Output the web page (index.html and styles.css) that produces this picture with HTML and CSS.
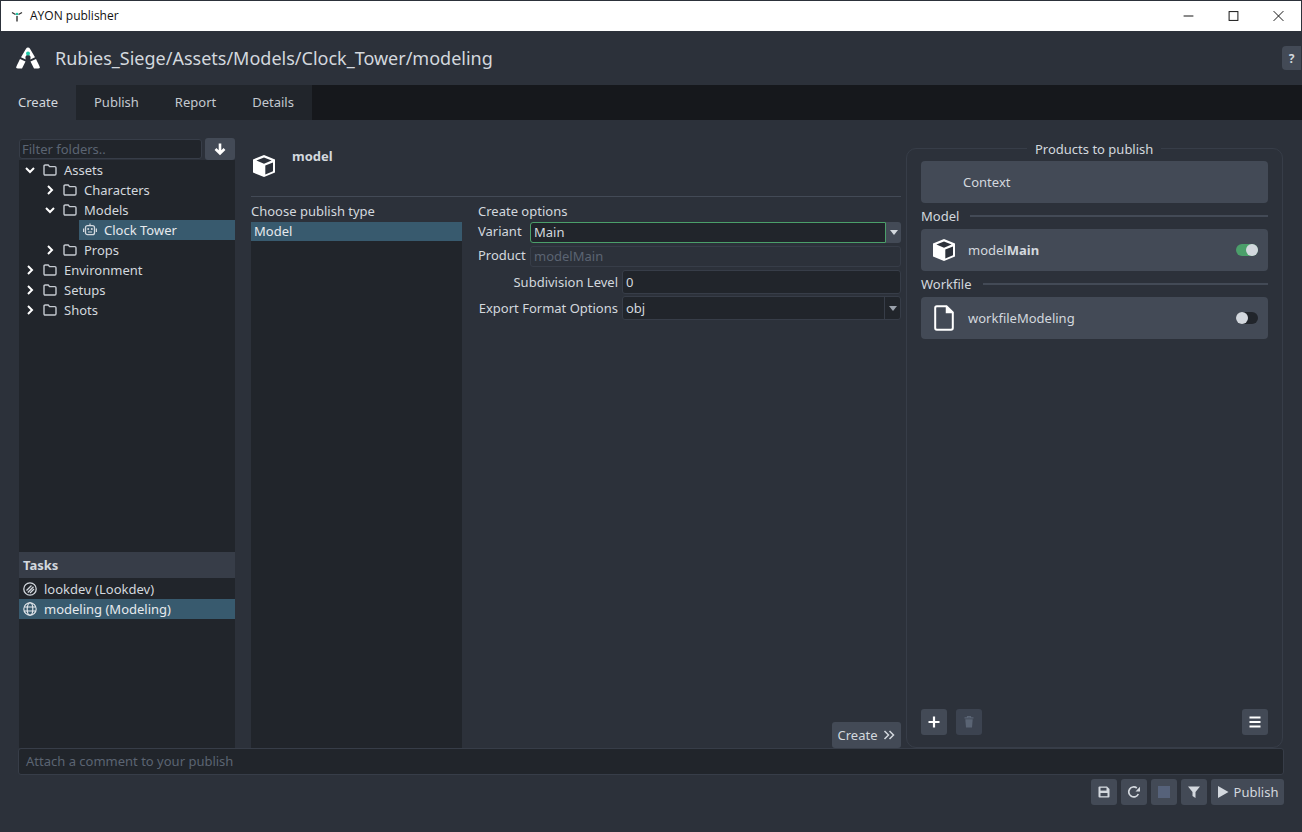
FILE: index.html
```html
<!DOCTYPE html>
<html lang="en">
<head>
    <meta charset="UTF-8">
    <title>AYON publisher</title>
    <link rel="stylesheet" href="styles.css">
</head>
<body>
    <svg class="sprites" width="0" height="0">
        <symbol id="folder" viewBox="0 0 14 12"><path d="M1 2.2Q1 1 2.2 1H5.2L6.6 2.6H11.8Q13 2.6 13 3.8V9.8Q13 11 11.8 11H2.2Q1 11 1 9.8Z" fill="none" stroke="currentColor" stroke-width="1.4"/></symbol>
        <symbol id="open" viewBox="0 0 10 10"><path d="M1 3L5 7L9 3" fill="none" stroke="currentColor" stroke-width="2"/></symbol>
        <symbol id="closed" viewBox="0 0 10 10"><path d="M3 1L7 5L3 9" fill="none" stroke="currentColor" stroke-width="2"/></symbol>
        <symbol id="cube" viewBox="0 0 24 24"><path d="M12 1L23 5.5V18.5L12 23L1 18.5V5.5Z" fill="#fff"/><path d="M12 3.6L19.6 6.6L12 9.7L4.4 6.6Z" fill="#2c313a"/><path d="M13.3 11.6L21 8.4V17.2L13.3 20.4Z" fill="#2c313a"/></symbol>
    </svg>

    <div class="titlebar">
        <svg class="app-icon" viewBox="0 0 12 12"><circle cx="6" cy="4" r="1.3" fill="#1fc8a8"/><path d="M1 2.5L4.5 4.5M11 2.5L7.5 4.5M6 6V11.5" stroke="#333" stroke-width="1.4"/></svg>
        <span class="app-name">AYON publisher</span>
        <div class="win-buttons">
            <svg viewBox="0 0 46 30"><path d="M18 15H28" stroke="#111"/></svg>
            <svg viewBox="0 0 46 30"><rect x="18.500" y="10.500" width="9" height="9" fill="none" stroke="#111"/></svg>
            <svg viewBox="0 0 46 30"><path d="M18 10L28 20M28 10L18 20" stroke="#111"/></svg>
        </div>
    </div>

    <div class="header">
        <svg class="logo" viewBox="0 0 24 22"><path d="M12 0.500Q13.300 0.500 14 1.700L19 10.300L14.300 12.500Q15.500 8 12 8Q8.500 8 9.700 12.500L5 10.300L10 1.700Q10.700 0.500 12 0.500Z" fill="#fff"/><path d="M4 12L9.500 14.500L6 21.500H2Q-0.500 21.500 0.600 19Z" fill="#fff"/><path d="M20 12L14.500 14.500L18 21.500H22Q24.500 21.500 23.400 19Z" fill="#fff"/><circle cx="12" cy="6.500" r="2" fill="#1fc8a8"/></svg>
        <span class="context-path">Rubies_Siege/Assets/Models/Clock_Tower/modeling</span>
        <button class="help-btn">?</button>
    </div>

    <div class="tabs">
        <div class="tab active">Create</div>
        <div class="tab">Publish</div>
        <div class="tab">Report</div>
        <div class="tab">Details</div>
    </div>

    <div class="main">
        <div class="left-col">
            <div class="filter-row">
                <div class="input filter-input placeholder">Filter folders..</div>
                <button class="btn filter-btn">
                    <svg viewBox="0 0 14 14"><path d="M7 1.500V11.500M2.500 7L7 11.500L11.500 7" fill="none" stroke="#fff" stroke-width="2.600"/></svg>
                </button>
            </div>
            <div class="tree">
                <div class="row lvl0"><svg class="chev"><use href="#open"/></svg><svg class="folder"><use href="#folder"/></svg>Assets</div>
                <div class="row lvl1"><svg class="chev"><use href="#closed"/></svg><svg class="folder"><use href="#folder"/></svg>Characters</div>
                <div class="row lvl1"><svg class="chev"><use href="#open"/></svg><svg class="folder"><use href="#folder"/></svg>Models</div>
                <div class="row lvl2 selected">
                    <svg class="folder robot" viewBox="0 0 14 14"><path d="M7 0.500V2.500" stroke="currentColor" stroke-width="1.200"/><rect x="2.500" y="2.700" width="9" height="9" rx="2" fill="none" stroke="currentColor" stroke-width="1.300"/><circle cx="5.200" cy="6" r="1" fill="currentColor"/><circle cx="8.800" cy="6" r="1" fill="currentColor"/><path d="M5 9H9M0.600 5.500V9M13.400 5.500V9" stroke="currentColor" stroke-width="1.200"/></svg>Clock Tower
                </div>
                <div class="row lvl1"><svg class="chev"><use href="#closed"/></svg><svg class="folder"><use href="#folder"/></svg>Props</div>
                <div class="row lvl0"><svg class="chev"><use href="#closed"/></svg><svg class="folder"><use href="#folder"/></svg>Environment</div>
                <div class="row lvl0"><svg class="chev"><use href="#closed"/></svg><svg class="folder"><use href="#folder"/></svg>Setups</div>
                <div class="row lvl0"><svg class="chev"><use href="#closed"/></svg><svg class="folder"><use href="#folder"/></svg>Shots</div>
            </div>
            <div class="tasks-head">Tasks</div>
            <div class="tasks">
                <div class="task">
                    <svg class="task-icon" viewBox="0 0 14 14"><circle cx="7" cy="7" r="6.200" fill="none" stroke="currentColor" stroke-width="1.300"/><path d="M3.500 8.500L8.500 3.500M4.800 10.500L10.500 4.800M7 11L11 7" stroke="currentColor" stroke-width="1.300"/></svg>lookdev (Lookdev)
                </div>
                <div class="task selected">
                    <svg class="task-icon" viewBox="0 0 14 14"><g fill="none" stroke="currentColor" stroke-width="1.100"><circle cx="7" cy="7" r="6.200"/><ellipse cx="7" cy="7" rx="2.800" ry="6.200"/><path d="M1.200 5H12.800M1.200 9H12.800"/></g></svg>modeling (Modeling)
                </div>
            </div>
        </div>

        <div class="mid-col">
            <div class="type-head">
                <svg class="cube-big"><use href="#cube"/></svg>
                <span class="type-name">model</span>
            </div>
            <div class="mid-body">
                <div class="type-col">
                    <div class="col-label">Choose publish type</div>
                    <div class="type-list"><div class="type-item">Model</div></div>
                </div>
                <div class="options-col">
                    <div class="col-label">Create options</div>
                    <div class="variant-row">
                        <label class="variant-label">Variant</label>
                        <div class="input variant-input">Main</div>
                        <div class="variant-arrow"><span class="arrow"></span></div>
                    </div>
                    <div class="variant-row product-row">
                        <label class="variant-label">Product</label>
                        <div class="input product-input">modelMain</div>
                    </div>
                    <div class="attrs">
                        <label>Subdivision Level</label>
                        <div class="input attr-input">0</div>
                        <label>Export Format Options</label>
                        <div class="input attr-input attr-select">obj<span class="select-btn"><span class="arrow"></span></span></div>
                    </div>
                    <div class="create-row">
                        <button class="btn create-btn">Create
                            <svg viewBox="0 0 12 12"><path d="M1.500 2L5.500 6L1.500 10M6.500 2L10.500 6L6.500 10" fill="none" stroke="currentColor" stroke-width="1.500"/></svg>
                        </button>
                    </div>
                </div>
            </div>
        </div>

        <div class="right-col">
            <div class="legend">Products to publish</div>
            <div class="card context-card">Context</div>
            <div class="group-label">Model</div>
            <div class="card">
                <svg class="cube-small"><use href="#cube"/></svg>
                <span>model<b>Main</b></span>
                <span class="toggle on"></span>
            </div>
            <div class="group-label">Workfile</div>
            <div class="card">
                <svg class="file-icon" viewBox="0 0 20 26"><path d="M2.800 1.200H12.500L18.800 7.500V23Q18.800 24.800 17 24.800H2.800Q1.200 24.800 1.200 23V3Q1.200 1.200 2.800 1.200Z" fill="none" stroke="#fff" stroke-width="2"/><path d="M12.500 1.200V7.500H18.800" fill="#fff" stroke="#fff" stroke-width="1.500"/></svg>
                <span class="file-name">workfileModeling</span>
                <span class="toggle"></span>
            </div>
            <div class="right-tools">
                <button class="btn square">
                    <svg viewBox="0 0 14 14"><path d="M7 1.500V12.500M1.500 7H12.500" stroke="#fff" stroke-width="2.200"/></svg>
                </button>
                <button class="btn square disabled">
                    <svg viewBox="0 0 14 14"><path d="M2.500 2.800H11.500M5.500 2.500V1.500H8.500V2.500" fill="none" stroke="#5a6474" stroke-width="1.200"/><path d="M3.300 4.200H10.700L10 12.500H4Z" fill="#5a6474"/></svg>
                </button>
                <button class="btn square menu-btn">
                    <svg viewBox="0 0 14 14"><path d="M1.500 2.500H12.500M1.500 7H12.500M1.500 11.500H12.500" stroke="#fff" stroke-width="2.200"/></svg>
                </button>
            </div>
        </div>
    </div>

    <div class="input comment placeholder">Attach a comment to your publish</div>

    <div class="footer">
        <button class="btn square">
            <svg viewBox="0 0 14 14"><path d="M1.500 2.500Q1.500 1.500 2.500 1.500H10L12.500 4V11.500Q12.500 12.500 11.500 12.500H2.500Q1.500 12.500 1.500 11.500Z" fill="#d3d8de"/><rect x="3.500" y="2.800" width="6" height="2.800" fill="#434a56"/><rect x="3.500" y="8" width="7" height="3.200" fill="#434a56"/></svg>
        </button>
        <button class="btn square">
            <svg viewBox="0 0 14 14"><path d="M11.300 9A5 5 0 1 1 9.800 3" fill="none" stroke="#d3d8de" stroke-width="1.700"/><path d="M8.500 6.500H13V1.800Z" fill="#d3d8de"/></svg>
        </button>
        <button class="btn square"><span class="stop"></span></button>
        <button class="btn square">
            <svg viewBox="0 0 14 14"><path d="M1 1.500H13L8.500 7V13L5.500 11V7Z" fill="#d3d8de"/></svg>
        </button>
        <button class="btn publish-btn">
            <svg viewBox="0 0 12 14"><path d="M1 1V13L11.500 7Z" fill="#d3d8de"/></svg>Publish
        </button>
    </div>
</body>
</html>
```

FILE: styles.css
```css
* {
    box-sizing: border-box;
}
html, body {
    margin: 0;
    height: 100%;
}
body {
    display: flex;
    flex-direction: column;
    width: 1302px;
    height: 832px;
    overflow: hidden;
    padding: 1px 1px 0 1px;
    background-color: #2c313a;
    color: #d3d8de;
    font-family: "Noto Sans", sans-serif;
    font-size: 13px;
    line-height: 18px;
}
.sprites {
    position: absolute;
}
button {
    font-family: inherit;
    font-size: inherit;
    color: inherit;
}
svg {
    display: block;
}

/* window title */
.titlebar {
    display: flex;
    align-items: center;
    height: 30px;
    flex: none;
    background-color: #fff;
    color: #111;
    font-family: "Open Sans", sans-serif;
    font-size: 12px;
    padding-left: 10px;
}
.app-icon {
    width: 12px;
    height: 12px;
}
.app-name {
    margin-left: 7px;
}
.win-buttons {
    display: flex;
    margin-left: auto;
}
.win-buttons svg {
    width: 45px;
    height: 30px;
}

.header {
    display: flex;
    align-items: center;
    height: 54px;
    flex: none;
    padding-left: 15px;
}
.logo {
    width: 24px;
    height: 22px;
}
.context-path {
    margin-left: 15px;
    font-size: 18px;
}
.help-btn {
    margin-left: auto;
    width: 19px;
    height: 24px;
    padding: 0;
    border: none;
    border-radius: 4px 0 0 4px;
    background-color: #434a56;
    font-weight: bold;
    font-size: 12px;
}

.tabs {
    display: flex;
    height: 35px;
    flex: none;
    margin: 0 -1px;
    background-color: #16181c;
}
.tab {
    padding: 8px 18px 0;
    background-color: #21252b;
    color: #c4c9d0;
}
.tab.active {
    background-color: #2c313a;
    color: #d3d8de;
}

.main {
    display: flex;
    flex: none;
    height: 628px;
    padding: 18px 0 0 18px;
}

/* folders and tasks */
.left-col {
    display: flex;
    flex-direction: column;
    width: 216px;
    height: 610px;
}
.filter-row {
    display: flex;
    justify-content: space-between;
    align-items: center;
    height: 22px;
}
.input {
    background-color: #21252b;
    border: 1px solid #373d48;
    border-radius: 3px;
    color: #d3d8de;
}
.placeholder {
    color: #5b6472;
}
.filter-input {
    width: 183px;
    height: 20px;
    padding-left: 2px;
    line-height: 19px;
}
.btn {
    display: flex;
    align-items: center;
    justify-content: center;
    background-color: #434a56;
    border: none;
    border-radius: 3px;
    padding: 0;
}
.filter-btn {
    width: 30px;
    height: 22px;
}
.filter-btn svg {
    width: 14px;
    height: 14px;
}
.tree {
    flex: none;
    height: 392px;
    background-color: #21252b;
}
.row {
    display: flex;
    align-items: center;
    height: 20px;
}
.lvl0 {
    padding-left: 6px;
}
.lvl1 {
    padding-left: 26px;
}
.lvl2 {
    margin-left: 60px;
    padding-left: 4px;
}
.chev {
    width: 10px;
    height: 10px;
    color: #fff;
    margin-right: 8px;
}
.folder {
    width: 14px;
    height: 14px;
    margin-right: 7px;
    color: #c4c9d0;
}
.selected {
    background-color: #385a6e;
    color: #e6e9ed;
}
.robot {
    color: #d3d8de;
}
.tasks-head {
    flex: none;
    height: 26px;
    padding: 4px 4px 0;
    background-color: #373d48;
    font-weight: bold;
}
.tasks {
    flex: 1;
    padding-top: 1px;
    background-color: #21252b;
}
.task {
    display: flex;
    align-items: center;
    height: 20px;
    padding-left: 4px;
}
.task-icon {
    width: 14px;
    height: 14px;
    margin-right: 7px;
}

/* creator */
.mid-col {
    width: 650px;
    margin-left: 16px;
    display: flex;
    flex-direction: column;
    height: 610px;
}
.type-head {
    display: flex;
    height: 59px;
    flex: none;
    border-bottom: 1px solid #434a56;
    padding: 16px 0 0 1px;
}
.cube-big {
    width: 24px;
    height: 24px;
}
.type-name {
    margin-left: 16px;
    margin-top: -7px;
    font-weight: bold;
}
.mid-body {
    display: flex;
    flex: 1;
    min-height: 0;
}
.type-col {
    display: flex;
    flex-direction: column;
    width: 211px;
}
.col-label {
    height: 25px;
    padding-top: 5px;
    flex: none;
}
.type-list {
    flex: 1;
    background-color: #21252b;
}
.type-item {
    height: 19px;
    padding-left: 3px;
    background-color: #385a6e;
    color: #e6e9ed;
}
.options-col {
    display: flex;
    flex-direction: column;
    flex: 1;
    margin-left: 16px;
}
.variant-row {
    display: flex;
    height: 21px;
}
.product-row {
    margin-top: 3px;
}
.variant-label {
    width: 52px;
    flex: none;
}
.variant-input {
    width: 356px;
    padding-left: 3px;
    border-color: #4b9f6a;
    border-radius: 3px 0 0 3px;
}
.variant-arrow {
    display: flex;
    align-items: center;
    justify-content: center;
    flex: 1;
    background-color: #434a56;
    border-radius: 0 3px 3px 0;
}
.arrow {
    display: block;
    border-left: 4px solid transparent;
    border-right: 4px solid transparent;
    border-top: 5px solid #d3d8de;
}
.product-input {
    flex: 1;
    padding-left: 3px;
    background-color: #2c313a;
    color: #5b6472;
}
.attrs {
    display: grid;
    grid-template-columns: 140px 279px;
    column-gap: 4px;
    row-gap: 2px;
    margin-top: 3px;
}
.attrs label {
    text-align: right;
    line-height: 24px;
}
.attr-input {
    position: relative;
    height: 24px;
    padding-left: 3px;
    line-height: 22px;
}
.select-btn {
    position: absolute;
    top: 0;
    right: 0;
    bottom: 0;
    width: 16px;
    display: flex;
    align-items: center;
    justify-content: center;
    border-left: 1px solid #373d48;
}
.select-btn .arrow {
    border-top-color: #9aa1ab;
}
.create-row {
    display: flex;
    justify-content: flex-end;
    margin-top: auto;
}
.create-btn {
    width: 69px;
    height: 26px;
    margin-bottom: 0;
    gap: 6px;
}
.create-btn svg {
    width: 12px;
    height: 12px;
}

/* products */
.right-col {
    position: relative;
    display: flex;
    flex-direction: column;
    width: 377px;
    height: 600px;
    margin: 10px 0 0 5px;
    padding: 12px 14px 12px;
    border: 1px solid #373d48;
    border-radius: 10px;
}
.legend {
    position: absolute;
    top: -9px;
    left: 120px;
    padding: 0 8px;
    background-color: #2c313a;
}
.card {
    display: flex;
    align-items: center;
    height: 42px;
    flex: none;
    padding: 0 10px 0 11px;
    background-color: #434a56;
    border-radius: 4px;
}
.context-card {
    padding-left: 42px;
}
.cube-small {
    width: 24px;
    height: 24px;
    margin-right: 12px;
}
.file-icon {
    width: 20px;
    height: 26px;
    margin: 0 14px 0 2px;
}
.toggle {
    position: relative;
    width: 22px;
    height: 12px;
    margin-left: auto;
    border-radius: 6px;
    background-color: #21252b;
}
.toggle::after {
    content: "";
    position: absolute;
    top: 0;
    left: 0;
    width: 12px;
    height: 12px;
    border-radius: 50%;
    background-color: #d3d8de;
}
.toggle.on {
    background-color: #4b9f6a;
}
.toggle.on::after {
    left: 10px;
}
.group-label {
    display: flex;
    align-items: center;
    height: 26px;
    flex: none;
}
.group-label::after {
    content: "";
    flex: 1;
    height: 2px;
    margin-left: 11px;
    background-color: #434a56;
}
.right-tools {
    display: flex;
    gap: 9px;
    margin-top: auto;
}
.square {
    width: 26px;
    height: 26px;
}
.square svg {
    width: 14px;
    height: 14px;
}
.disabled {
    background-color: #3c4350;
}
.menu-btn {
    margin-left: auto;
}

.comment {
    flex: none;
    height: 27px;
    margin: 0 17px;
    padding-left: 7px;
    line-height: 25px;
    border-radius: 3px;
}
.footer {
    display: flex;
    justify-content: flex-end;
    gap: 4px;
    height: 26px;
    margin: 4px 17px 0 0;
    flex: none;
}
.stop {
    width: 12px;
    height: 12px;
    background-color: #56627a;
}
.publish-btn {
    width: 73px;
    gap: 5px;
}
.publish-btn svg {
    width: 12px;
    height: 14px;
}
```
